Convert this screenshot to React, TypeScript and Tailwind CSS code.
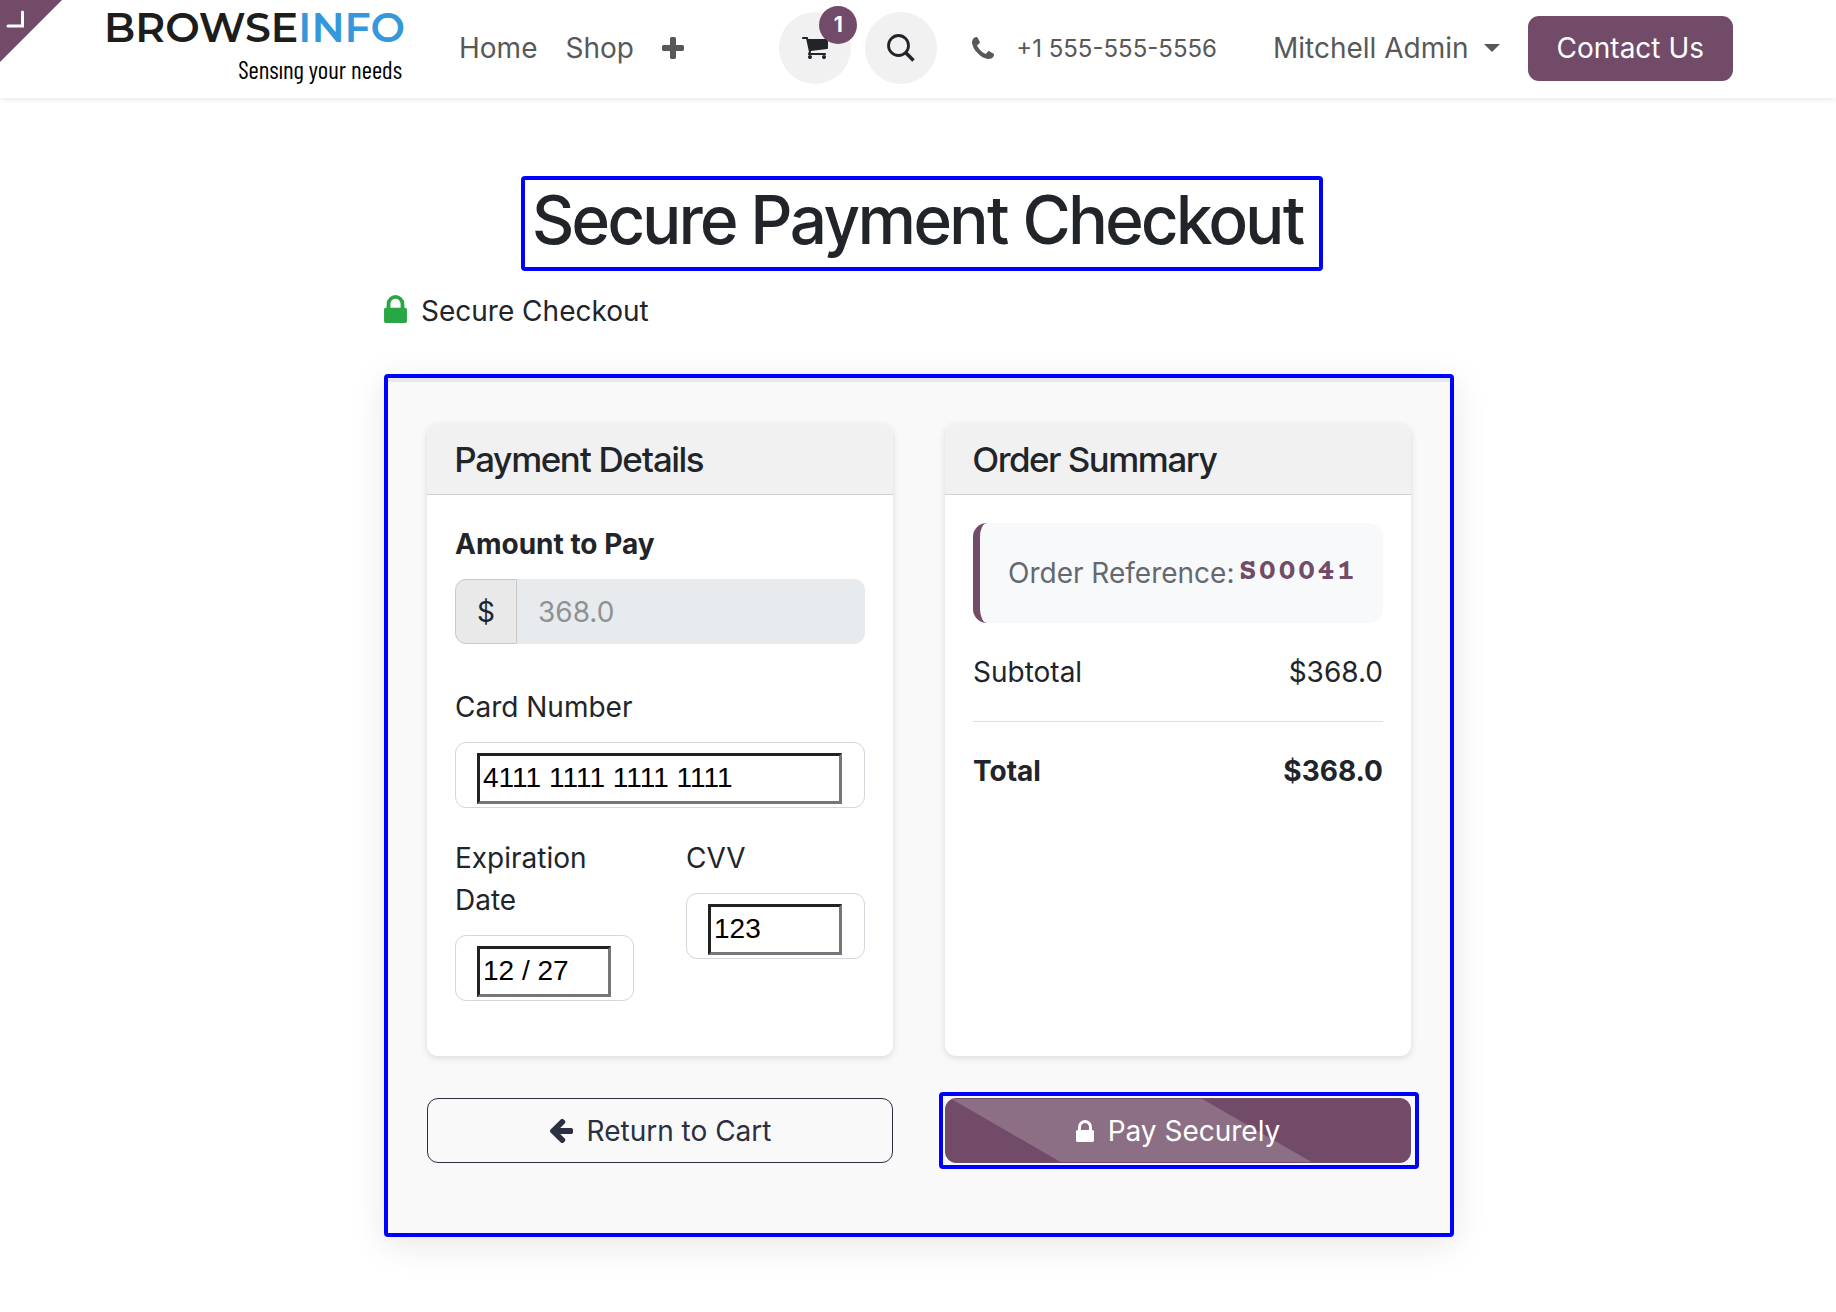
import React from "react";

function Logo() {
  return (
    <a href="#" className="flex w-[298px] flex-col pb-[7px] text-[#1d1d1b]">
      <span className="font-['Montserrat','Inter',sans-serif] text-[41px] leading-[42px] font-semibold whitespace-nowrap">
        BROWSE<span className="text-[#3498db]">INFO</span>
      </span>
      <span className="self-end pt-[7px] font-['Barlow_Condensed','Roboto',sans-serif] text-[25px] leading-7 whitespace-nowrap text-black">
        Sensıng your needs
      </span>
    </a>
  );
}

function EditCorner() {
  return (
    <svg className="absolute top-0 left-0 size-[62px]" viewBox="0 0 62 62" aria-hidden="true">
      <path d="M0 0H62L0 62Z" fill="#714b67" />
      <path d="M8 26H22.500V12" fill="none" stroke="#fff" strokeWidth="3" strokeLinecap="round" />
    </svg>
  );
}

function PlusIcon() {
  return (
    <svg className="size-[22px]" viewBox="192 128 1408 1408" fill="currentColor" aria-hidden="true">
      <path d="M1600 736v192q0 40-28 68t-68 28h-416v416q0 40-28 68t-68 28h-192q-40 0-68-28t-28-68v-416h-416q-40 0-68-28t-28-68v-192q0-40 28-68t68-28h416v-416q0-40 28-68t68-28h192q40 0 68 28t28 68v416h416q40 0 68 28t28 68z" />
    </svg>
  );
}

function LockIcon({ className }: { className: string }) {
  return (
    <svg className={className} viewBox="320 128 1152 1408" fill="currentColor" aria-hidden="true">
      <path d="M640 768h512v-192q0-106-75-181t-181-75-181 75-75 181v192zm832 96v576q0 40-28 68t-68 28h-960q-40 0-68-28t-28-68v-576q0-40 28-68t68-28h32v-192q0-184 132-316t316-132 316 132 132 316v192h32q40 0 68 28t28 68z" />
    </svg>
  );
}

function ArrowLeftIcon() {
  return (
    <svg className="size-6" viewBox="128 192 1536 1536" fill="currentColor" aria-hidden="true">
      <path d="M1664 896v128q0 53-32.500 90.500t-84.500 37.500h-704l293 294q38 36 38 90t-38 90l-75 76q-37 37-90 37-52 0-91-37l-651-652q-37-37-37-90 0-52 37-91l651-650q38-38 91-38 52 0 90 38l75 74q38 38 38 91t-38 91l-293 293h704q52 0 84.500 37.500t32.500 90.500z" />
    </svg>
  );
}

function CartIcon() {
  return (
    <svg className="h-[26px] w-[26px]" viewBox="0 0 1664 1664" fill="currentColor" aria-hidden="true">
      <path d="M640 1408q0 52-38 90t-90 38-90-38-38-90 38-90 90-38 90 38 38 90zm896 0q0 52-38 90t-90 38-90-38-38-90 38-90 90-38 90 38 38 90zm128-1088v512q0 24-16.500 42.500t-40.500 21.500l-1044 122q13 60 13 70 0 16-24 64h920q26 0 45 19t19 45-19 45-45 19h-1024q-26 0-45-19t-19-45q0-11 8-31.500t16-36 21.500-40 15.500-29.500l-177-823h-204q-26 0-45-19t-19-45 19-45 45-19h256q16 0 28.500 6.500t19.500 15.500 13 24.500 8 26 5.500 29.500 4.500 26h1201q26 0 45 19t19 45z" />
    </svg>
  );
}

function PhoneIcon() {
  return (
    <svg className="size-[22px]" viewBox="0 0 1408 1408" fill="currentColor" aria-hidden="true">
      <path d="M1408 1112q0 27-10 70.500t-21 68.500q-21 50-122 106-94 51-186 51-27 0-53-3.500t-57.500-12.500-47-14.500-55.500-20.500-49-18q-98-35-175-83-127-79-264-216t-216-264q-48-77-83-175-3-9-18-49t-20.500-55.500-14.500-47-12.500-57.500-3.500-53q0-92 51-186 56-101 106-122 25-11 68.500-21t70.500-10q14 0 21 3 18 6 53 76 11 19 30 54t35 63.500 31 53.500q3 4 17.500 25t21.500 35.500 7 28.500q0 20-28.500 50t-62 55-62 53-28.500 46q0 9 5 22.500t8.500 20.500 14 24 11.500 19q76 137 174 235t235 174q2 1 19 11.500t24 14 20.500 8.500 22.500 5q18 0 46-28.500t53-62 55-62 50-28.500q14 0 28.500 7t35.500 21.500 25 17.500q25 15 53.500 31t63.500 35 54 30q70 35 76 53 3 7 3 21z" />
    </svg>
  );
}

function SearchIcon() {
  return (
    <svg className="size-7" viewBox="0 0 28 28" fill="none" stroke="#212529" aria-hidden="true">
      <circle cx="11.500" cy="11.500" r="10" strokeWidth="2.800" />
      <path d="M18.800 18.800L26.500 26.500" strokeWidth="3.600" />
    </svg>
  );
}

function Header() {
  return (
    <header className="relative flex h-[98px] items-center bg-white pr-[103px] pb-[2px] pl-[104px] text-[#585858] shadow-[0_0_7px_rgba(0,0,0,0.15)]">
      <EditCorner />
      <Logo />
      <nav className="ml-[57px] flex items-center gap-7">
        <a href="#">Home</a>
        <a href="#">Shop</a>
        <button type="button" aria-label="New page">
          <PlusIcon />
        </button>
      </nav>
      <div className="ml-auto flex items-center">
        <a
          href="#"
          aria-label="Cart"
          className="relative flex size-[72px] items-center justify-center rounded-full bg-[#f1f1f1] text-[#212529]"
        >
          <CartIcon />
          <span className="absolute -top-[6px] -right-[6px] flex size-[38px] items-center justify-center rounded-full bg-[#714b67] text-[21px] font-bold text-white">
            1
          </span>
        </a>
        <button
          type="button"
          aria-label="Search"
          className="ml-[14px] flex size-[72px] items-center justify-center rounded-full bg-[#f1f1f1]"
        >
          <SearchIcon />
        </button>
        <a href="#" className="ml-[35px] flex items-center gap-[22px] text-[24px]">
          <PhoneIcon />
          <span className="pt-[2px]">+1 555-555-5556</span>
        </a>
        <button type="button" className="ml-14 flex items-center gap-[15px]">
          Mitchell Admin
          <span className="border-x-8 border-t-8 border-x-transparent border-t-current" />
        </button>
        <a
          href="#"
          className="ml-7 flex h-[65px] items-center rounded-[11px] bg-[#714b67] px-[29px] text-white"
        >
          Contact Us
        </a>
      </div>
    </header>
  );
}

function Card({ title, children }: { title: string; children: React.ReactNode }) {
  return (
    <section className="overflow-hidden rounded-[11px] bg-white shadow-[0_2px_7px_rgba(0,0,0,0.13)]">
      <h2 className="h-[71px] border-b border-[#d1d1d1] bg-[#f1f1f1] px-7 font-['Inter_Tight','Inter',sans-serif] text-[35px] leading-[70px] font-medium">
        {title}
      </h2>
      <div className="p-7 pb-[55px]">{children}</div>
    </section>
  );
}

function CardField({ id, label, value }: { id: string; label: string; value: string }) {
  return (
    <div>
      <label htmlFor={id} className="mb-[14px] block">
        {label}
      </label>
      <div className="rounded-[11px] border border-[#d3d7de] pt-[10px] pr-[22px] pb-[3px] pl-[21px]">
        <input
          id={id}
          defaultValue={value}
          className="block h-[51px] w-full border-[3px] border-t-[#212121] border-r-[#767676] border-b-[#767676] border-l-[#212121] bg-white px-[3px] pb-[2px] font-['Liberation_Sans',Arial,sans-serif] text-black"
        />
      </div>
    </div>
  );
}

export default function App() {
  return (
    <div className="bg-white font-['Inter',sans-serif] text-[28px] leading-[42px] text-[#212529]">
      <Header />
      <main className="pt-[82px] pr-4 pb-[74px] pl-[18px]">
        <div className="mx-auto max-w-[1070px]">
          <div className="flex justify-center">
            <h1 className="relative font-['Inter_Tight','Inter',sans-serif] text-[66px] leading-[80px] font-medium whitespace-nowrap">
              Secure Payment Checkout
              <span className="absolute -top-1 -right-[18px] -bottom-[11px] -left-3 rounded-sm border-4 border-[#0000ff]" />
            </h1>
          </div>

          <p className="mt-[30px] flex items-center gap-[14px]">
            <LockIcon className="mb-1 h-[28px] w-[23px] text-[#28a745]" />
            Secure Checkout
          </p>

          <div className="mt-[42px] rounded-sm border-4 border-[#0000ff] bg-[#f9f9f9] shadow-[0_7px_35px_rgba(0,0,0,0.1)]">
            <form
              className="border-t-4 border-[#e7eaed] px-[39px] pt-[42px] pb-[70px]"
              onSubmit={(e) => e.preventDefault()}
            >
              <div className="grid grid-cols-2 gap-x-[52px] gap-y-[42px]">
                <Card title="Payment Details">
                  <label htmlFor="amount" className="mb-[14px] block font-bold">
                    Amount to Pay
                  </label>
                  <div className="flex h-[65px]">
                    <span className="flex w-[62px] items-center justify-center rounded-l-[11px] border border-[#c8c8c8] bg-[#e9e9e9]">
                      $
                    </span>
                    <input
                      id="amount"
                      disabled
                      defaultValue="368.0"
                      className="min-w-0 flex-1 rounded-r-[11px] bg-[#e7ebee] px-[21px] text-[#8f9193]"
                    />
                  </div>
                  <div className="mt-[42px]">
                    <CardField id="number" label="Card Number" value="4111 1111 1111 1111" />
                  </div>
                  <div className="mt-[29px] grid grid-cols-2 items-start gap-[52px]">
                    <CardField id="expiry" label="Expiration Date" value="12 / 27" />
                    <CardField id="cvv" label="CVV" value="123" />
                  </div>
                </Card>

                <Card title="Order Summary">
                  <div className="flex h-[100px] items-center rounded-[14px] border-l-[7px] border-[#714b67] bg-[#f8f9fb] pl-7">
                    <span className="whitespace-nowrap text-[#65696d]">Order Reference:</span>
                    <span className="ml-1 font-['Courier_Prime','Liberation_Mono',monospace] text-[31px] font-bold tracking-[1px] text-[#714b67]">
                      S00041
                    </span>
                  </div>
                  <dl>
                    <div className="mt-7 flex justify-between">
                      <dt>Subtotal</dt>
                      <dd>$368.0</dd>
                    </div>
                    <div className="mt-7 flex justify-between border-t border-[#dedede] pt-7 font-bold">
                      <dt>Total</dt>
                      <dd>$368.0</dd>
                    </div>
                  </dl>
                </Card>

                <button
                  type="button"
                  className="flex h-[65px] items-center justify-center gap-[14px] rounded-[11px] border border-[#2b2f42] text-[#2b2f42]"
                >
                  <ArrowLeftIcon />
                  Return to Cart
                </button>

                <div className="relative">
                  <button
                    type="submit"
                    className="relative flex h-[65px] w-full items-center justify-center gap-[14px] overflow-hidden rounded-[11px] border border-[#714b67] bg-[#714b67] text-white"
                  >
                    <span className="absolute inset-y-0 left-[13%] w-[54%] skew-x-[60deg] bg-white/20" />
                    <LockIcon className="relative h-[22px] w-[18px]" />
                    <span className="relative">Pay Securely</span>
                  </button>
                  <span className="pointer-events-none absolute -inset-y-[6px] -right-2 -left-[6px] rounded-sm border-4 border-[#0000ff]" />
                </div>
              </div>
            </form>
          </div>
        </div>
      </main>
    </div>
  );
}
